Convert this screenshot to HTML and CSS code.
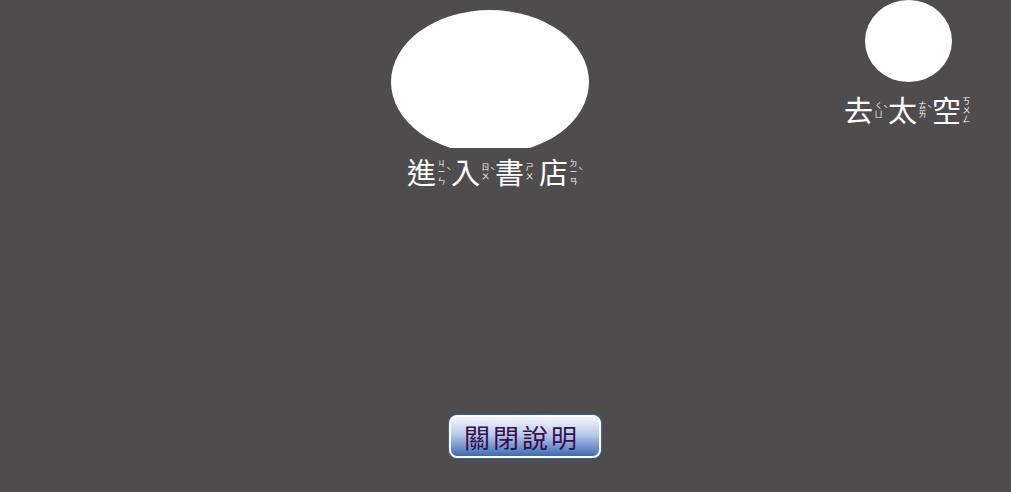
FILE: index.html
```html
<!DOCTYPE html>
<html lang="zh-Hant">
<head>
<meta charset="utf-8">
<title>說明</title>
<link rel="stylesheet" href="styles.css">
</head>
<body>
<div class="page">
  <div class="top-row">
    <div class="item item-store">
      <div class="blob blob-store"></div>
      <div class="label">
        <span class="ch">進<span class="zy"><span class="zy-col">ㄐ<br>ㄧ<br>ㄣ</span><span class="tone">ˋ</span></span></span>
        <span class="ch">入<span class="zy"><span class="zy-col">ㄖ<br>ㄨ</span><span class="tone">ˋ</span></span></span>
        <span class="ch">書<span class="zy"><span class="zy-col">ㄕ<br>ㄨ</span><span class="tone"></span></span></span>
        <span class="ch">店<span class="zy"><span class="zy-col">ㄉ<br>ㄧ<br>ㄢ</span><span class="tone">ˋ</span></span></span>
      </div>
    </div>
    <div class="item item-space">
      <div class="blob blob-space"></div>
      <div class="label">
        <span class="ch">去<span class="zy"><span class="zy-col">ㄑ<br>ㄩ</span><span class="tone">ˋ</span></span></span>
        <span class="ch">太<span class="zy"><span class="zy-col">ㄊ<br>ㄞ</span><span class="tone">ˋ</span></span></span>
        <span class="ch">空<span class="zy"><span class="zy-col">ㄎ<br>ㄨ<br>ㄥ</span><span class="tone"></span></span></span>
      </div>
    </div>
  </div>
  <div class="bottom-row">
    <button class="close-btn">關閉說明</button>
  </div>
</div>
</body>
</html>
```

FILE: styles.css
```css
html, body {
  margin: 0;
  padding: 0;
  height: 100%;
}
body {
  background: #4e4c4d;
  font-family: "Noto Sans CJK TC", "Noto Sans", sans-serif;
  color: #fff;
  overflow: hidden;
}
.page {
  width: 1011px;
  height: 492px;
  display: flex;
  flex-direction: column;
}
.top-row {
  display: flex;
  align-items: flex-start;
  height: 415px;
}
.item {
  display: flex;
  flex-direction: column;
  align-items: center;
}
.item-store {
  margin-left: 391px;
  margin-top: 10px;
  width: 198px;
}
.item-space {
  margin-left: 257px;
  width: 124px;
}
.blob {
  background: #fff;
  border-radius: 50%;
}
.blob-store {
  width: 198px;
  height: 144px;
  clip-path: inset(0 0 6px 0);
  margin-bottom: -6px;
}
.blob-space {
  width: 87px;
  height: 82px;
}
.label {
  display: flex;
  align-items: center;
  white-space: nowrap;
  font-size: 29px;
  line-height: 32px;
}
.item-store .label {
  margin-top: 7px;
  margin-left: 10px;
}
.item-space .label {
  margin-top: 11px;
  margin-left: 4px;
}
.ch {
  display: inline-flex;
  align-items: center;
}
.zy {
  display: inline-flex;
  align-items: center;
  margin-left: 1px;
  width: 14px;
}
.zy-col {
  font-size: 8px;
  line-height: 9px;
  text-align: center;
  width: 9px;
}
.tone {
  font-size: 9px;
  line-height: 9px;
  width: 5px;
  margin-top: 1px;
}
.bottom-row {
  display: flex;
}
.close-btn {
  margin-left: 449px;
  width: 152px;
  height: 43px;
  box-sizing: border-box;
  border: 2px solid #fff;
  border-radius: 8px;
  box-shadow: 0 0 0 1px #2e63c0;
  background: linear-gradient(to bottom, #f4f7fc 0%, #b9cbe8 45%, #3f6ab8 100%);
  color: #3a0d4c;
  font-family: "Noto Sans CJK TC", sans-serif;
  font-size: 26px;
  line-height: 1;
  letter-spacing: 3px;
  padding: 0 6px 0 0;
  display: flex;
  align-items: center;
  justify-content: center;
}
```
